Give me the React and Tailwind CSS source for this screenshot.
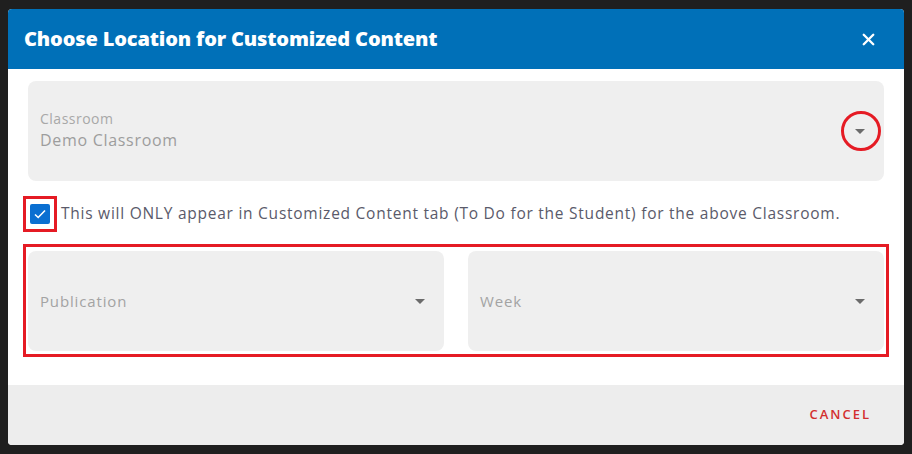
import { X } from 'lucide-react'

function Caret() {
  return (
    <svg width="10" height="5" viewBox="0 0 10 5" className="shrink-0">
      <path d="M0 0h10L5 5z" fill="#6b6b6b" />
    </svg>
  )
}

function SelectField({ label, value, circled }) {
  return (
    <div className="relative h-[100px] flex-1 rounded-lg bg-[#efefef] flex items-center justify-between px-3">
      {value ? (
        <div className="flex flex-col">
          <span className="text-[14px] leading-4 text-[#a8a8a8] tracking-[0.5px]">{label}</span>
          <span className="mt-[1px] text-[16px] leading-6 text-[#9d9d9d] tracking-[0.7px]">{value}</span>
        </div>
      ) : (
        <span className="text-[15px] text-[#a3a3a3] tracking-[0.85px]">{label}</span>
      )}
      <div className="mr-[7px]">
        <Caret />
      </div>
      {circled && (
        <div className="absolute right-[3px] top-[30px] w-[40px] h-[40px] rounded-full border-[3px] border-[#e51b24]" />
      )}
    </div>
  )
}

export default function App() {
  return (
    <div
      className="w-[912px] h-[454px] bg-[#1f1f1f] pt-[9px] pl-[8px]"
      style={{ fontFamily: '"Open Sans", "Noto Sans", sans-serif' }}
    >
      <div className="w-[896px] h-[436px] rounded-[4px] overflow-hidden bg-white flex flex-col">
        {/* Header */}
        <div className="h-[60px] bg-[#0070b8] flex items-center justify-between pl-4 pr-[26px]">
          <h1 className="text-white text-[20px] font-extrabold tracking-[-0.15px]">
            Choose Location for Customized Content
          </h1>
          <X className="w-[19px] h-[19px] text-white" strokeWidth={3} />
        </div>

        {/* Body */}
        <div className="flex-1 px-5 pt-3">
          <SelectField label="Classroom" value="Demo Classroom" circled />

          <div className="flex items-center mt-[15px] -ml-[5px]">
            <div className="w-[34px] h-[36px] border-[3px] border-[#e51b24] flex items-center justify-center">
              <div className="w-[20px] h-[20px] bg-[#0a6fd1] flex items-center justify-center rounded-[2px]">
                <svg width="14" height="14" viewBox="0 0 14 14">
                  <path d="M2 7.5l3.2 3L12 3.5" fill="none" stroke="white" strokeWidth="1.6" />
                </svg>
              </div>
            </div>
            <span className="ml-[4px] text-[15.5px] text-[#5a5a6a] tracking-[0.75px]">
              This will ONLY appear in Customized Content tab (To Do for the Student) for the above Classroom.
            </span>
          </div>

          <div className="mt-3 -mx-[5px] border-[3px] border-[#e51b24] px-[2px] pt-1 pb-[3px] flex gap-6">
            <SelectField label="Publication" />
            <SelectField label="Week" />
          </div>
        </div>

        {/* Footer */}
        <div className="h-[60px] bg-[#ededed] flex items-center justify-end pr-[33px]">
          <button className="text-[13px] font-semibold tracking-[2px] text-[#d32f2f]">CANCEL</button>
        </div>
      </div>
    </div>
  )
}
